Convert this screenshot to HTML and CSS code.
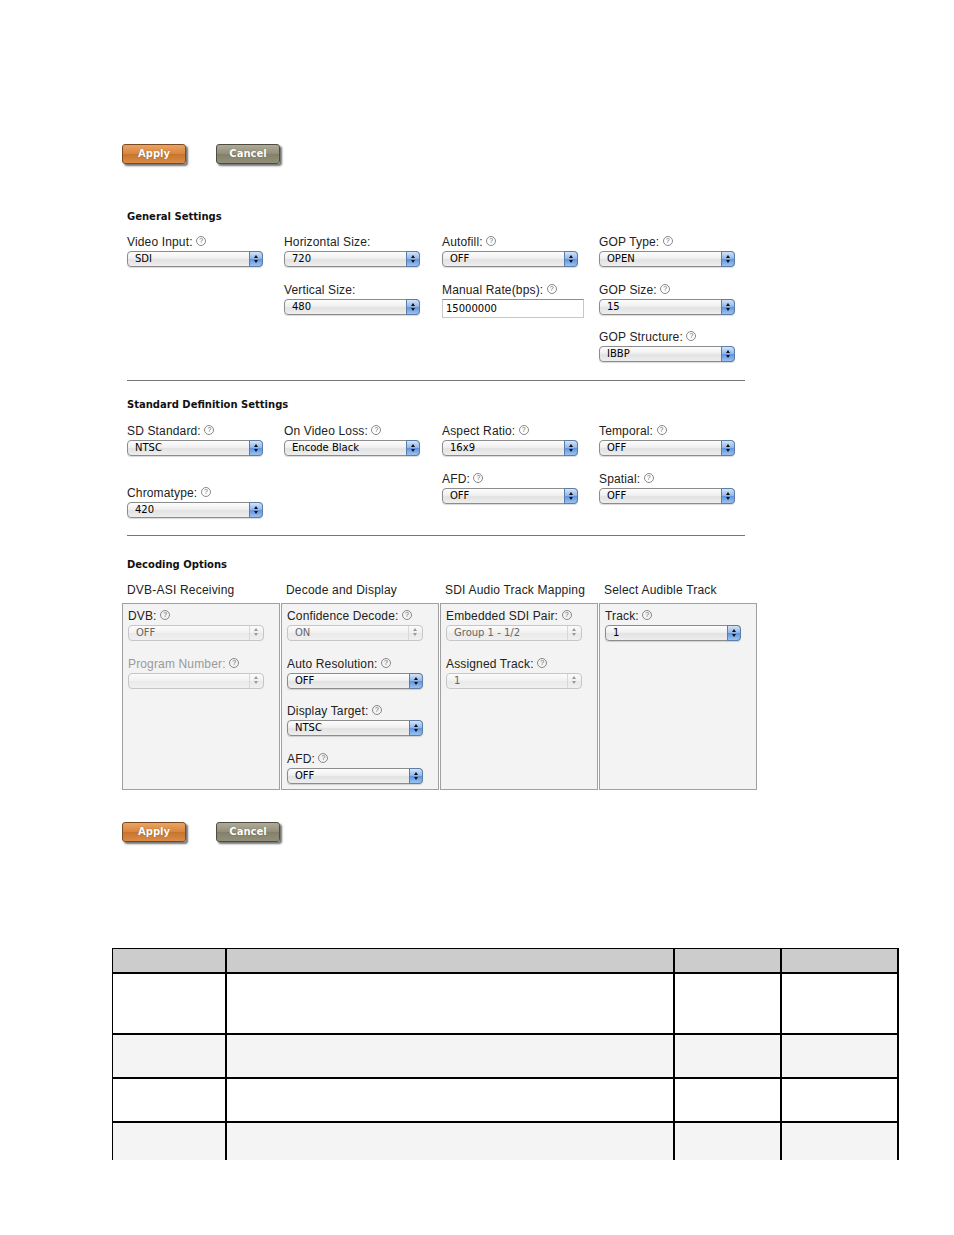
FILE: index.html
```html
<!DOCTYPE html>
<html lang="en">

<head>
    <meta charset="UTF-8">
    <meta name="viewport" content="width=device-width, initial-scale=1.0">
    <title>Encoder Settings</title>
    <link rel="stylesheet" href="styles.css">
</head>

<body>
    <div class="form">
        <div class="actions">
            <button class="btn apply">Apply</button>
            <button class="btn cancel">Cancel</button>
        </div>

        <div class="section first">
            <h3>General Settings</h3>
            <div class="grid">
                <div class="col">
                    <div class="field">
                        <label>Video Input: <span class="help">?</span></label>
                        <div class="sel"><span>SDI</span><i class="step"></i></div>
                    </div>
                </div>
                <div class="col">
                    <div class="field">
                        <label>Horizontal Size:</label>
                        <div class="sel"><span>720</span><i class="step"></i></div>
                    </div>
                    <div class="field">
                        <label>Vertical Size:</label>
                        <div class="sel"><span>480</span><i class="step"></i></div>
                    </div>
                </div>
                <div class="col">
                    <div class="field">
                        <label>Autofill: <span class="help">?</span></label>
                        <div class="sel"><span>OFF</span><i class="step"></i></div>
                    </div>
                    <div class="field">
                        <label>Manual Rate(bps): <span class="help">?</span></label>
                        <div class="text-input">15000000</div>
                    </div>
                </div>
                <div class="col">
                    <div class="field">
                        <label>GOP Type: <span class="help">?</span></label>
                        <div class="sel"><span>OPEN</span><i class="step"></i></div>
                    </div>
                    <div class="field">
                        <label>GOP Size: <span class="help">?</span></label>
                        <div class="sel"><span>15</span><i class="step"></i></div>
                    </div>
                    <div class="field">
                        <label>GOP Structure: <span class="help">?</span></label>
                        <div class="sel"><span>IBBP</span><i class="step"></i></div>
                    </div>
                </div>
            </div>
        </div>

        <hr>

        <div class="section sd">
            <h3>Standard Definition Settings</h3>
            <div class="grid">
                <div class="col">
                    <div class="field">
                        <label>SD Standard: <span class="help">?</span></label>
                        <div class="sel"><span>NTSC</span><i class="step"></i></div>
                    </div>
                    <div class="field far">
                        <label>Chromatype: <span class="help">?</span></label>
                        <div class="sel"><span>420</span><i class="step"></i></div>
                    </div>
                </div>
                <div class="col">
                    <div class="field">
                        <label>On Video Loss: <span class="help">?</span></label>
                        <div class="sel"><span>Encode Black</span><i class="step"></i></div>
                    </div>
                </div>
                <div class="col">
                    <div class="field">
                        <label>Aspect Ratio: <span class="help">?</span></label>
                        <div class="sel"><span>16x9</span><i class="step"></i></div>
                    </div>
                    <div class="field">
                        <label>AFD: <span class="help">?</span></label>
                        <div class="sel"><span>OFF</span><i class="step"></i></div>
                    </div>
                </div>
                <div class="col">
                    <div class="field">
                        <label>Temporal: <span class="help">?</span></label>
                        <div class="sel"><span>OFF</span><i class="step"></i></div>
                    </div>
                    <div class="field">
                        <label>Spatial: <span class="help">?</span></label>
                        <div class="sel"><span>OFF</span><i class="step"></i></div>
                    </div>
                </div>
            </div>
        </div>

        <hr>

        <div class="section decoding">
            <h3>Decoding Options</h3>
            <div class="boxes">
                <div class="box-title">DVB-ASI Receiving</div>
                <div class="box-title">Decode and Display</div>
                <div class="box-title">SDI Audio Track Mapping</div>
                <div class="box-title">Select Audible Track</div>

                <div class="box">
                    <div class="field">
                        <label>DVB: <span class="help">?</span></label>
                        <div class="sel off"><span>OFF</span><i class="step"></i></div>
                    </div>
                    <div class="field">
                        <label class="muted">Program Number: <span class="help">?</span></label>
                        <div class="sel off"><span></span><i class="step"></i></div>
                    </div>
                </div>
                <div class="box">
                    <div class="field">
                        <label>Confidence Decode: <span class="help">?</span></label>
                        <div class="sel off"><span>ON</span><i class="step"></i></div>
                    </div>
                    <div class="field">
                        <label>Auto Resolution: <span class="help">?</span></label>
                        <div class="sel"><span>OFF</span><i class="step"></i></div>
                    </div>
                    <div class="field">
                        <label>Display Target: <span class="help">?</span></label>
                        <div class="sel"><span>NTSC</span><i class="step"></i></div>
                    </div>
                    <div class="field">
                        <label>AFD: <span class="help">?</span></label>
                        <div class="sel"><span>OFF</span><i class="step"></i></div>
                    </div>
                </div>
                <div class="box">
                    <div class="field">
                        <label>Embedded SDI Pair: <span class="help">?</span></label>
                        <div class="sel off"><span>Group 1 - 1/2</span><i class="step"></i></div>
                    </div>
                    <div class="field">
                        <label>Assigned Track: <span class="help">?</span></label>
                        <div class="sel off"><span>1</span><i class="step"></i></div>
                    </div>
                </div>
                <div class="box">
                    <div class="field">
                        <label>Track: <span class="help">?</span></label>
                        <div class="sel"><span>1</span><i class="step"></i></div>
                    </div>
                </div>
            </div>
        </div>

        <div class="actions bottom">
            <button class="btn apply">Apply</button>
            <button class="btn cancel">Cancel</button>
        </div>
    </div>

    <div class="table-wrap">
        <table class="grid-table">
            <tr class="head">
                <th class="c1"></th>
                <th class="c2"></th>
                <th class="c3"></th>
                <th class="c4"></th>
            </tr>
            <tr class="r1">
                <td></td><td></td><td></td><td></td>
            </tr>
            <tr class="r2 alt">
                <td></td><td></td><td></td><td></td>
            </tr>
            <tr class="r3">
                <td></td><td></td><td></td><td></td>
            </tr>
            <tr class="r4 alt">
                <td></td><td></td><td></td><td></td>
            </tr>
        </table>
    </div>
</body>

</html>
```

FILE: styles.css
```css
body {
    margin: 0;
    background: #fff;
    font-family: "Liberation Sans", Arial, sans-serif;
    color: #111;
}

.form {
    margin-left: 122px;
    padding-top: 144px;
}

.actions {
    display: flex;
    gap: 30px;
    height: 20px;
}

.actions.bottom {
    margin-top: 32px;
}

.btn {
    width: 64px;
    height: 20px;
    padding: 0;
    border-radius: 3px;
    font-family: "DejaVu Sans", Verdana, sans-serif;
    font-size: 10px;
    font-weight: bold;
    line-height: 16px;
    color: #fff;
    text-shadow: 0 0 1px rgba(0, 0, 0, 0.4);
    box-shadow: 2px 2px 2px rgba(0, 0, 0, 0.55);
    cursor: pointer;
}

.apply {
    background: linear-gradient(#eaa466, #d8843c 50%, #c8732c 51%, #d98c48);
    border: 1px solid #7a4a22;
}

.cancel {
    background: linear-gradient(#b0ab98, #928d78 50%, #838069 51%, #939079);
    border: 1px solid #4e4c40;
}

.section {
    margin-left: 5px;
}

.section h3 {
    margin: 0;
    height: 14px;
    line-height: 14px;
    font-family: "DejaVu Sans", Verdana, sans-serif;
    font-size: 10px;
    font-weight: bold;
    color: #111;
}

.section.first {
    margin-top: 46px;
}

.section.sd {
    margin-top: 17px;
}

.section.decoding {
    margin-top: 22px;
    margin-left: 0;
}

.section.decoding h3 {
    margin-left: 5px;
}

.grid {
    display: grid;
    grid-template-columns: 157px 158px 157px 157px;
    margin-top: 11px;
}

.sd .grid {
    margin-top: 12px;
}

.col {
    display: flex;
    flex-direction: column;
    gap: 15.5px;
}

.field {
    display: flex;
    flex-direction: column;
    gap: 2px;
}

.field.far {
    margin-top: 14.5px;
}

label {
    height: 14px;
    line-height: 14px;
    font-size: 12px;
    letter-spacing: 0.15px;
    color: #222;
    white-space: nowrap;
}

label.muted {
    color: #9a9a9a;
}

.help {
    display: inline-block;
    width: 8px;
    height: 8px;
    border: 1px solid #888;
    border-radius: 50%;
    font-size: 7px;
    line-height: 8px;
    text-align: center;
    color: #666;
    vertical-align: 3px;
    letter-spacing: 0;
}

.sel {
    position: relative;
    box-sizing: border-box;
    width: 136px;
    height: 16px;
    border: 1px solid #8c8c8c;
    border-radius: 4px;
    background: linear-gradient(#fdfdfd, #f0f0f0 45%, #e2e2e2 55%, #eeeeee);
    box-shadow: 0 1px 1px rgba(0, 0, 0, 0.15);
    font-family: "DejaVu Sans", Verdana, sans-serif;
    font-size: 10px;
    line-height: 14px;
    color: #000;
    padding-left: 7px;
}

.sel .step {
    position: absolute;
    top: -1px;
    right: -1px;
    width: 14px;
    height: 16px;
    box-sizing: border-box;
    border: 1px solid #5a7ea8;
    border-radius: 0 4px 4px 0;
    background: linear-gradient(#d4e4f8, #8cb4ea 50%, #5f93dc 51%, #9cc2f2);
}

.sel .step::before,
.sel .step::after {
    content: "";
    position: absolute;
    left: 4px;
    border-left: 2.5px solid transparent;
    border-right: 2.5px solid transparent;
}

.sel .step::before {
    top: 3px;
    border-bottom: 3px solid #111;
}

.sel .step::after {
    top: 8px;
    border-top: 3px solid #111;
}

.sel.off {
    border-color: #c6c6c6;
    background: linear-gradient(#fbfbfb, #f1f1f1 50%, #e9e9e9 51%, #f0f0f0);
    box-shadow: none;
    color: #666;
}

.sel.off .step {
    border: none;
    border-left: 1px solid #d8d8d8;
    top: 0;
    right: 0;
    height: 14px;
    background: transparent;
}

.sel.off .step::before {
    top: 2px;
    border-bottom-color: #9a9a9a;
}

.sel.off .step::after {
    top: 7px;
    border-top-color: #9a9a9a;
}

.text-input {
    box-sizing: border-box;
    width: 142px;
    height: 19px;
    border: 1px solid #c8c8c8;
    border-top-color: #8e8e8e;
    background: #fff;
    font-family: "DejaVu Sans", Verdana, sans-serif;
    font-size: 10px;
    line-height: 17px;
    padding-left: 3px;
    color: #000;
}

hr {
    width: 618px;
    height: 1px;
    margin: 18px 0 0 5px;
    border: none;
    background: #777;
}

.sd ~ hr {
    margin-top: 17px;
}

.boxes {
    display: grid;
    grid-template-columns: repeat(4, 158px);
    column-gap: 1px;
    margin-top: 11px;
}

.box-title {
    height: 14px;
    line-height: 14px;
    font-size: 12px;
    letter-spacing: 0.2px;
    color: #222;
    padding-left: 5px;
    margin-bottom: 6px;
    white-space: nowrap;
}

.box {
    box-sizing: border-box;
    height: 187px;
    border: 1px solid #a0a0a0;
    background: #f3f3f3;
    padding: 5px 5px 4px;
    display: flex;
    flex-direction: column;
    gap: 15.5px;
}

.table-wrap {
    margin: 106px 0 0 112px;
    width: 790px;
    height: 212px;
    overflow: hidden;
}

.grid-table {
    border-collapse: collapse;
    table-layout: fixed;
    width: 786px;
}

.grid-table th,
.grid-table td {
    border: 2px solid #000;
    padding: 0;
}

.grid-table tr:first-child th {
    border-top-width: 1px;
}

.grid-table th:first-child,
.grid-table td:first-child {
    border-left-width: 1px;
}

.grid-table .c1 { width: 112px; }
.grid-table .c2 { width: 446px; }
.grid-table .c3 { width: 105px; }
.grid-table .c4 { width: 115px; }

.head th {
    height: 23px;
    background: #cccccc;
}

.r1 td { height: 59px; background: #fff; }
.r2 td { height: 42px; }
.r3 td { height: 42px; background: #fff; border-bottom-width: 1px; }
.r4 td { height: 80px; }

.alt td {
    background: #f4f4f4;
}
```
